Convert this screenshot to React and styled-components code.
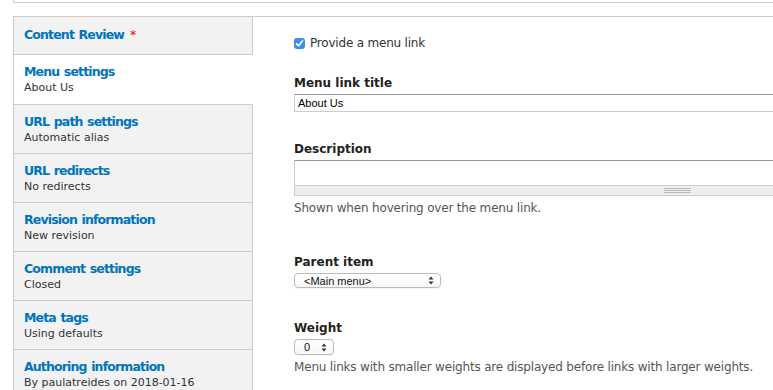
import React from "react";
import styled, { createGlobalStyle } from "styled-components";

const GlobalStyle = createGlobalStyle`
    html, body {
        margin: 0;
        padding: 0;
        background: #fff;
        overflow: hidden;
    }
    body {
        font-family: "DejaVu Sans", "Liberation Sans", sans-serif;
        color: #333;
    }
`;

const tabs = [
    { title: "Content Review", required: true },
    { title: "Menu settings", summary: "About Us", selected: true },
    { title: "URL path settings", summary: "Automatic alias" },
    { title: "URL redirects", summary: "No redirects" },
    { title: "Revision information", summary: "New revision" },
    { title: "Comment settings", summary: "Closed" },
    { title: "Meta tags", summary: "Using defaults" },
    { title: "Authoring information", summary: "By paulatreides on 2018-01-16" },
];

export default function App() {
    return (
        <>
            <GlobalStyle />
            <Page>
                <PrevBox />
                <VerticalTabs>
                    <TabList>
                        {tabs.map((tab, i) => (
                            <Tab key={i} selected={tab.selected}>
                                <TabTitle>
                                    {tab.title}
                                    {tab.required && <Star>*</Star>}
                                </TabTitle>
                                {tab.summary && <TabSummary>{tab.summary}</TabSummary>}
                            </Tab>
                        ))}
                    </TabList>
                    <Pane>
                        <CheckRow>
                            <CheckBox>
                                <svg width="9" height="9" viewBox="0 0 9 9">
                                    <path d="M1.5 4.8 L3.6 6.8 L7.5 2" stroke="#fff" strokeWidth="1.7" fill="none" strokeLinecap="round" strokeLinejoin="round" />
                                </svg>
                            </CheckBox>
                            <span>Provide a menu link</span>
                        </CheckRow>

                        <Field gap="25px">
                            <Label>Menu link title</Label>
                            <TextInput>About Us</TextInput>
                        </Field>

                        <Field gap="29px">
                            <Label>Description</Label>
                            <TextArea />
                            <Grippie>
                                <GrippieLines />
                            </Grippie>
                            <Help>Shown when hovering over the menu link.</Help>
                        </Field>

                        <Field gap="38px">
                            <Label>Parent item</Label>
                            <Select width="147px" height="15px">
                                <span>&lt;Main menu&gt;</span>
                                <Arrows />
                            </Select>
                        </Field>

                        <Field gap="32px">
                            <Label>Weight</Label>
                            <Select width="40px" height="16px">
                                <span>0</span>
                                <Arrows />
                            </Select>
                            <Help>Menu links with smaller weights are displayed before links with larger weights.</Help>
                        </Field>
                    </Pane>
                </VerticalTabs>
            </Page>
        </>
    );
}

function Arrows() {
    return (
        <svg width="6" height="9" viewBox="0 0 6 9">
            <path d="M3 0.5 L5.5 3.5 L0.5 3.5 Z" fill="#333" />
            <path d="M3 8.5 L5.5 5.5 L0.5 5.5 Z" fill="#333" />
        </svg>
    );
}

const Page = styled.div`
    padding-left: 13px;
    width: 1200px;
`

const PrevBox = styled.div`
    height: 2px;
    border-left: 1px solid #ccc;
    border-bottom: 1px solid #ccc;
    margin-bottom: 13px;
`

const VerticalTabs = styled.div`
    display: flex;
    border-top: 1px solid #ccc;
`

const TabList = styled.ul`
    list-style: none;
    margin: 0;
    padding: 0;
    width: 240px;
    flex-shrink: 0;
`

const Tab = styled.li`
    box-sizing: border-box;
    padding: 9px 10px 0 10px;
    height: ${props => props.selected ? "50px" : "49px"};
    background: ${props => props.selected ? "#fff" : "#f2f2f2"};
    border-left: 1px solid #ccc;
    border-right: 1px solid ${props => props.selected ? "#fff" : "#ccc"};
    border-bottom: 1px solid #ccc;
    &:first-child {
        height: 38px;
        padding-top: 10px;
    }
`

const TabTitle = styled.div`
    font-size: 12.5px;
    font-weight: bold;
    letter-spacing: -0.85px;
    word-spacing: 1px;
    color: #0074bd;
    line-height: 16px;
`

const Star = styled.span`
    color: #e00;
    margin-left: 6px;
    font-weight: normal;
`

const TabSummary = styled.div`
    font-size: 11px;
    line-height: 16px;
    color: #333;
`

const Pane = styled.div`
    flex: 1;
    padding: 19px 0 0 41px;
`

const CheckRow = styled.div`
    display: flex;
    align-items: center;
    gap: 5px;
    font-size: 12px;
    letter-spacing: -0.2px;
    color: #333;
    height: 14px;
`

const CheckBox = styled.span`
    width: 11px;
    height: 11px;
    border-radius: 3px;
    background: #3b8ef1;
    display: flex;
    align-items: center;
    justify-content: center;
`

const Field = styled.div`
    margin-top: ${props => props.gap};
`

const Label = styled.div`
    font-size: 12px;
    font-weight: bold;
    color: #222;
    line-height: 16px;
    margin-bottom: 3px;
`

const TextInput = styled.div`
    box-sizing: border-box;
    width: 900px;
    height: 18px;
    border: 1px solid #ccc;
    border-top-color: #999;
    padding: 1px 3px;
    font-family: "Liberation Sans", Arial, sans-serif;
    font-size: 11px;
    line-height: 14px;
    color: #000;
`

const TextArea = styled.div`
    box-sizing: border-box;
    width: 767px;
    height: 25px;
    border: 1px solid #ccc;
    border-top-color: #999;
    border-bottom: none;
`

const Grippie = styled.div`
    box-sizing: border-box;
    width: 767px;
    height: 11px;
    background: #eee;
    border: 1px solid #ccc;
    display: flex;
    align-items: center;
    justify-content: center;
`

const GrippieLines = styled.div`
    width: 27px;
    height: 5px;
    border-top: 1px solid #bbb;
    border-bottom: 1px solid #bbb;
    box-sizing: border-box;
    background: linear-gradient(#bbb, #bbb) center / 100% 1px no-repeat;
`

const Help = styled.div`
    font-size: 12px;
    letter-spacing: -0.18px;
    line-height: 16px;
    color: #555;
    margin-top: 4px;
`

const Select = styled.div`
    box-sizing: border-box;
    width: ${props => props.width};
    height: ${props => props.height};
    border: 1px solid #bbb;
    border-radius: 4px;
    display: flex;
    align-items: center;
    justify-content: space-between;
    padding: 0 6px 0 9px;
    font-family: "Liberation Sans", Arial, sans-serif;
    font-size: 11px;
    color: #111;
    background: linear-gradient(#fff, #f7f7f7);
    box-shadow: 0 1px 1px rgba(0, 0, 0, 0.05);
`
